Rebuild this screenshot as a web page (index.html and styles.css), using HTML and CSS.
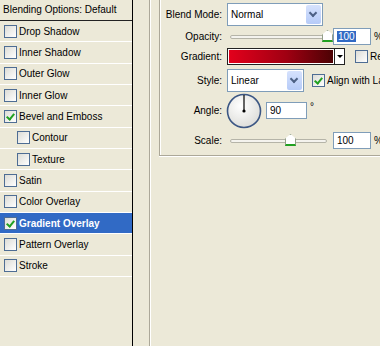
FILE: index.html
```html
<!DOCTYPE html>
<html lang="en">
<head>
  <meta charset="UTF-8">
  <title>Layer Style - Gradient Overlay</title>
  <link rel="stylesheet" href="styles.css">
</head>
<body>

<div class="dialog">
  <!-- lista de estilos a la izquierda -->
  <div class="styles-list">
    <div class="list-head">Blending Options: Default</div>
    <div class="style-row"><span class="check"></span>Drop Shadow</div>
    <div class="style-row"><span class="check"></span>Inner Shadow</div>
    <div class="style-row"><span class="check"></span>Outer Glow</div>
    <div class="style-row"><span class="check"></span>Inner Glow</div>
    <div class="style-row"><span class="check on"></span>Bevel and Emboss</div>
    <div class="style-row sub"><span class="check"></span>Contour</div>
    <div class="style-row sub"><span class="check"></span>Texture</div>
    <div class="style-row"><span class="check"></span>Satin</div>
    <div class="style-row"><span class="check"></span>Color Overlay</div>
    <div class="style-row selected"><span class="check on"></span>Gradient Overlay</div>
    <div class="style-row"><span class="check"></span>Pattern Overlay</div>
    <div class="style-row"><span class="check"></span>Stroke</div>
  </div>

  <div class="divider"></div>

  <div class="settings">
    <div class="group">
      <div class="field row-blend">
        <span class="label">Blend Mode:</span>
        <div class="select select-blend">Normal<span class="drop"></span></div>
      </div>

      <div class="field row-opacity">
        <span class="label">Opacity:</span>
        <div class="slider">
          <div class="track"></div>
          <span class="thumb thumb-opacity"></span>
        </div>
        <div class="num"><span class="sel">100</span></div>
        <span class="unit">%</span>
      </div>

      <div class="field row-gradient">
        <span class="label">Gradient:</span>
        <div class="swatch"></div>
        <div class="swatch-drop"></div>
        <span class="check box-reverse"></span>
        <span class="opt">Reverse</span>
      </div>

      <div class="field row-style">
        <span class="label">Style:</span>
        <div class="select select-style">Linear<span class="drop"></span></div>
        <span class="check on box-align"></span>
        <span class="opt">Align with Layer</span>
      </div>

      <div class="field row-angle">
        <span class="label">Angle:</span>
        <svg class="dial" width="36" height="36" viewBox="0 0 36 36">
          <defs>
            <radialGradient id="dialFill" cx="40%" cy="35%" r="70%">
              <stop offset="0" stop-color="#ffffff"/>
              <stop offset="1" stop-color="#dcdcd8"/>
            </radialGradient>
          </defs>
          <circle cx="18" cy="18" r="16.5" fill="url(#dialFill)" stroke="#3c5784" stroke-width="1.6"/>
          <line x1="18" y1="18" x2="18" y2="2" stroke="#000" stroke-width="1.2"/>
          <circle cx="18" cy="18" r="1.6" fill="#000"/>
        </svg>
        <div class="num num-angle">90</div>
        <span class="unit deg">°</span>
      </div>

      <div class="field row-scale">
        <span class="label">Scale:</span>
        <div class="slider">
          <div class="track"></div>
          <span class="thumb thumb-scale"></span>
        </div>
        <div class="num">100</div>
        <span class="unit">%</span>
      </div>
    </div>
  </div>
</div>

</body>
</html>
```

FILE: styles.css
```css
body {
  margin: 0;
  padding: 0;
  background: #ece9d8;
  font-family: "Liberation Sans", Arial, sans-serif;
  font-size: 10px;
  color: #000;
  overflow: hidden;
}
.dialog {
  display: flex;
  height: 346px;
}

/* lista de estilos */
.styles-list {
  width: 132px;
  border-right: 1px solid #000;
  flex-shrink: 0;
}
.list-head {
  height: 20px;
  line-height: 20px;
  padding-left: 3px;
  border-bottom: 1px solid #222;
  white-space: nowrap;
}
.style-row {
  height: 20.33px;
  border-bottom: 1px solid #fff;
  display: flex;
  align-items: center;
  padding-left: 4px;
  white-space: nowrap;
}
.style-row.sub {
  padding-left: 17px;
}
.style-row .check {
  margin-right: 2px;
}
.style-row.selected {
  background: #316ac5;
  color: #fff;
  font-weight: bold;
}

/* casillas estilo XP */
.check {
  width: 11px;
  height: 11px;
  border: 1px solid #4e6d94;
  background: linear-gradient(135deg, #dcdcd6, #fff);
  flex-shrink: 0;
  position: relative;
}
.check.on::after {
  content: "";
  position: absolute;
  left: 3px;
  top: 1px;
  width: 3px;
  height: 6px;
  border: solid #21a121;
  border-width: 0 2px 2px 0;
  transform: rotate(40deg);
}

.divider {
  width: 1px;
  margin-left: 16px;
  background: #aca899;
  box-shadow: 1px 0 0 #fff;
  flex-shrink: 0;
}

/* panel derecho */
.settings {
  padding-left: 9px;
  flex-shrink: 0;
}
.group {
  width: 240px;
  height: 152px;
  padding-top: 3px;
  border-left: 1px solid #aca899;
  border-bottom: 1px solid #aca899;
  box-shadow: inset 1px 0 0 #fff, 0 1px 0 #fff;
}
.field {
  display: flex;
  align-items: center;
  white-space: nowrap;
}
.field > * {
  flex-shrink: 0;
}
.label {
  width: 62px;
  text-align: right;
  margin-right: 5px;
}
.row-blend { height: 23px; }
.row-opacity { height: 20px; }
.row-gradient { height: 20px; }
.row-style { height: 23px; margin-top: 3px; }
.row-angle { height: 37px; }
.row-scale { height: 22px; }

.select {
  height: 21px;
  border: 1px solid #7f9db9;
  background: #fff;
  display: flex;
  align-items: center;
  padding-left: 3px;
  box-sizing: content-box;
  position: relative;
}
.select-blend { width: 91px; }
.select-style { width: 72px; }
.drop {
  margin-left: auto;
  margin-right: 1px;
  width: 15px;
  height: 19px;
  border-radius: 2px;
  background: linear-gradient(#d6e2fd, #b6cbf8);
  position: relative;
}
.drop::after {
  content: "";
  position: absolute;
  left: 4px;
  top: 5px;
  width: 4px;
  height: 4px;
  border: solid #4d6185;
  border-width: 0 2px 2px 0;
  transform: rotate(45deg);
}

.slider {
  width: 106px;
  height: 16px;
  position: relative;
}
.track {
  position: absolute;
  left: 3px;
  top: 7px;
  width: 95px;
  height: 2px;
  border: 1px solid #b5b4a8;
  border-radius: 2px;
  background: #f4f3ee;
}
.thumb {
  position: absolute;
  top: 2px;
  width: 9px;
  height: 9px;
  background: #fff;
  border: 1px solid #93a088;
  border-bottom: 2px solid #21a121;
  clip-path: polygon(0 40%, 50% 0, 100% 40%, 100% 100%, 0 100%);
}
.thumb-opacity { left: 95px; }
.thumb-scale { left: 58px; }

.num {
  width: 33px;
  height: 15px;
  line-height: 15px;
  border: 1px solid #7f9db9;
  background: #fff;
  padding-left: 3px;
}
.num .sel {
  background: #316ac5;
  color: #fff;
  padding: 0 1px;
}
.num-angle {
  width: 36px;
  margin-left: 4px;
}
.unit {
  margin-left: 3px;
}
.deg {
  align-self: flex-start;
  margin-top: 9px;
}

.swatch {
  width: 106px;
  height: 15px;
  border: 1px solid #222;
  box-shadow: inset 0 0 0 1px #fff;
  background: linear-gradient(to right, #e4001c, #a00012 55%, #4a0204);
}
.swatch-drop {
  width: 9px;
  height: 15px;
  border: 1px solid #222;
  border-left: 0;
  background: #fff;
  position: relative;
}
.swatch-drop::after {
  content: "";
  position: absolute;
  left: 2px;
  top: 6px;
  border: 3px solid transparent;
  border-top: 3px solid #000;
}
.box-reverse {
  margin-left: 10px;
}
.box-align {
  margin-left: 8px;
}
.opt {
  margin-left: 2px;
}
.dial {
  margin-left: -1px;
}
```
